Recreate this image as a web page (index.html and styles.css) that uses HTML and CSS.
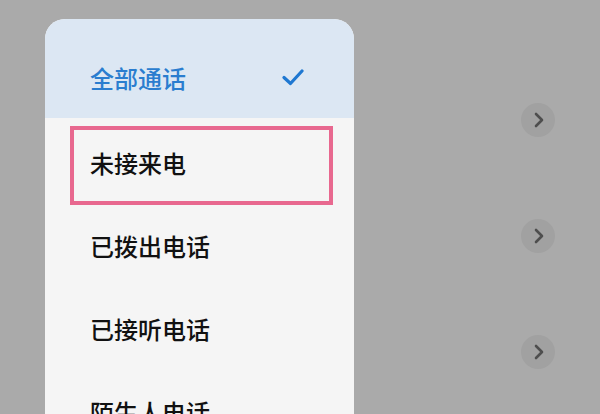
FILE: index.html
```html
<!DOCTYPE html>
<html lang="zh">
<head>
<meta charset="utf-8">
<link rel="stylesheet" href="styles.css">
</head>
<body>
<div class="screen">
  <div class="menu">
    <div class="menu-item selected">
      <span class="label">全部通话</span>
      <svg class="check" viewBox="0 0 22 18" width="22" height="18"><path d="M2 9.5 L8.5 15.5 L20 3" fill="none" stroke="#1f78d1" stroke-width="3.2" stroke-linecap="round" stroke-linejoin="round"/></svg>
    </div>
    <div class="menu-list">
      <div class="menu-item marked"><span class="label">未接来电</span></div>
      <div class="menu-item"><span class="label">已拨出电话</span></div>
      <div class="menu-item"><span class="label">已接听电话</span></div>
      <div class="menu-item"><span class="label">陌生人电话</span></div>
    </div>
  </div>
  <div class="chevrons">
    <div class="chev"><svg viewBox="0 0 12 16" width="12" height="16"><path d="M3 2 L9 8 L3 14" fill="none" stroke="#4e4e4e" stroke-width="2.6" stroke-linecap="round" stroke-linejoin="round"/></svg></div>
    <div class="chev"><svg viewBox="0 0 12 16" width="12" height="16"><path d="M3 2 L9 8 L3 14" fill="none" stroke="#4e4e4e" stroke-width="2.6" stroke-linecap="round" stroke-linejoin="round"/></svg></div>
    <div class="chev"><svg viewBox="0 0 12 16" width="12" height="16"><path d="M3 2 L9 8 L3 14" fill="none" stroke="#4e4e4e" stroke-width="2.6" stroke-linecap="round" stroke-linejoin="round"/></svg></div>
  </div>
</div>
</body>
</html>
```
FILE: styles.css
```css
html, body {
  margin: 0;
  padding: 0;
  width: 600px;
  height: 414px;
  overflow: hidden;
  background: #aaaaaa;
  font-family: "Noto Sans CJK SC", "Noto Sans", sans-serif;
}
.screen {
  display: flex;
  align-items: flex-start;
  height: 414px;
  overflow: hidden;
}
.menu {
  margin-left: 45px;
  margin-top: 19px;
  width: 309px;
  height: 460px;
  background: #f5f5f5;
  border-radius: 20px 20px 0 0;
  overflow: hidden;
  flex-shrink: 0;
}
.menu-item {
  position: relative;
  display: flex;
  align-items: center;
  justify-content: space-between;
  height: 83px;
  padding: 0 50px 0 45px;
  font-size: 24px;
  font-weight: 500;
  color: #111111;
}
.menu-item.selected {
  background: #dce7f3;
  color: #2a7dcf;
  padding-top: 17px;
  height: 82px;
}
.check {
  display: block;
}
.menu-list {
  padding-top: 3px;
}
.menu-item.marked::after {
  content: "";
  position: absolute;
  left: 25px;
  right: 21px;
  top: 5px;
  bottom: -1px;
  border: 4px solid #e8688f;
}
.chevrons {
  margin-left: 167px;
  margin-top: 103px;
  display: flex;
  flex-direction: column;
  gap: 82px;
}
.chev {
  width: 34px;
  height: 34px;
  border-radius: 50%;
  background: #a1a1a1;
  display: flex;
  align-items: center;
  justify-content: center;
}
.chev svg {
  display: block;
  margin-left: 2px;
}
```
